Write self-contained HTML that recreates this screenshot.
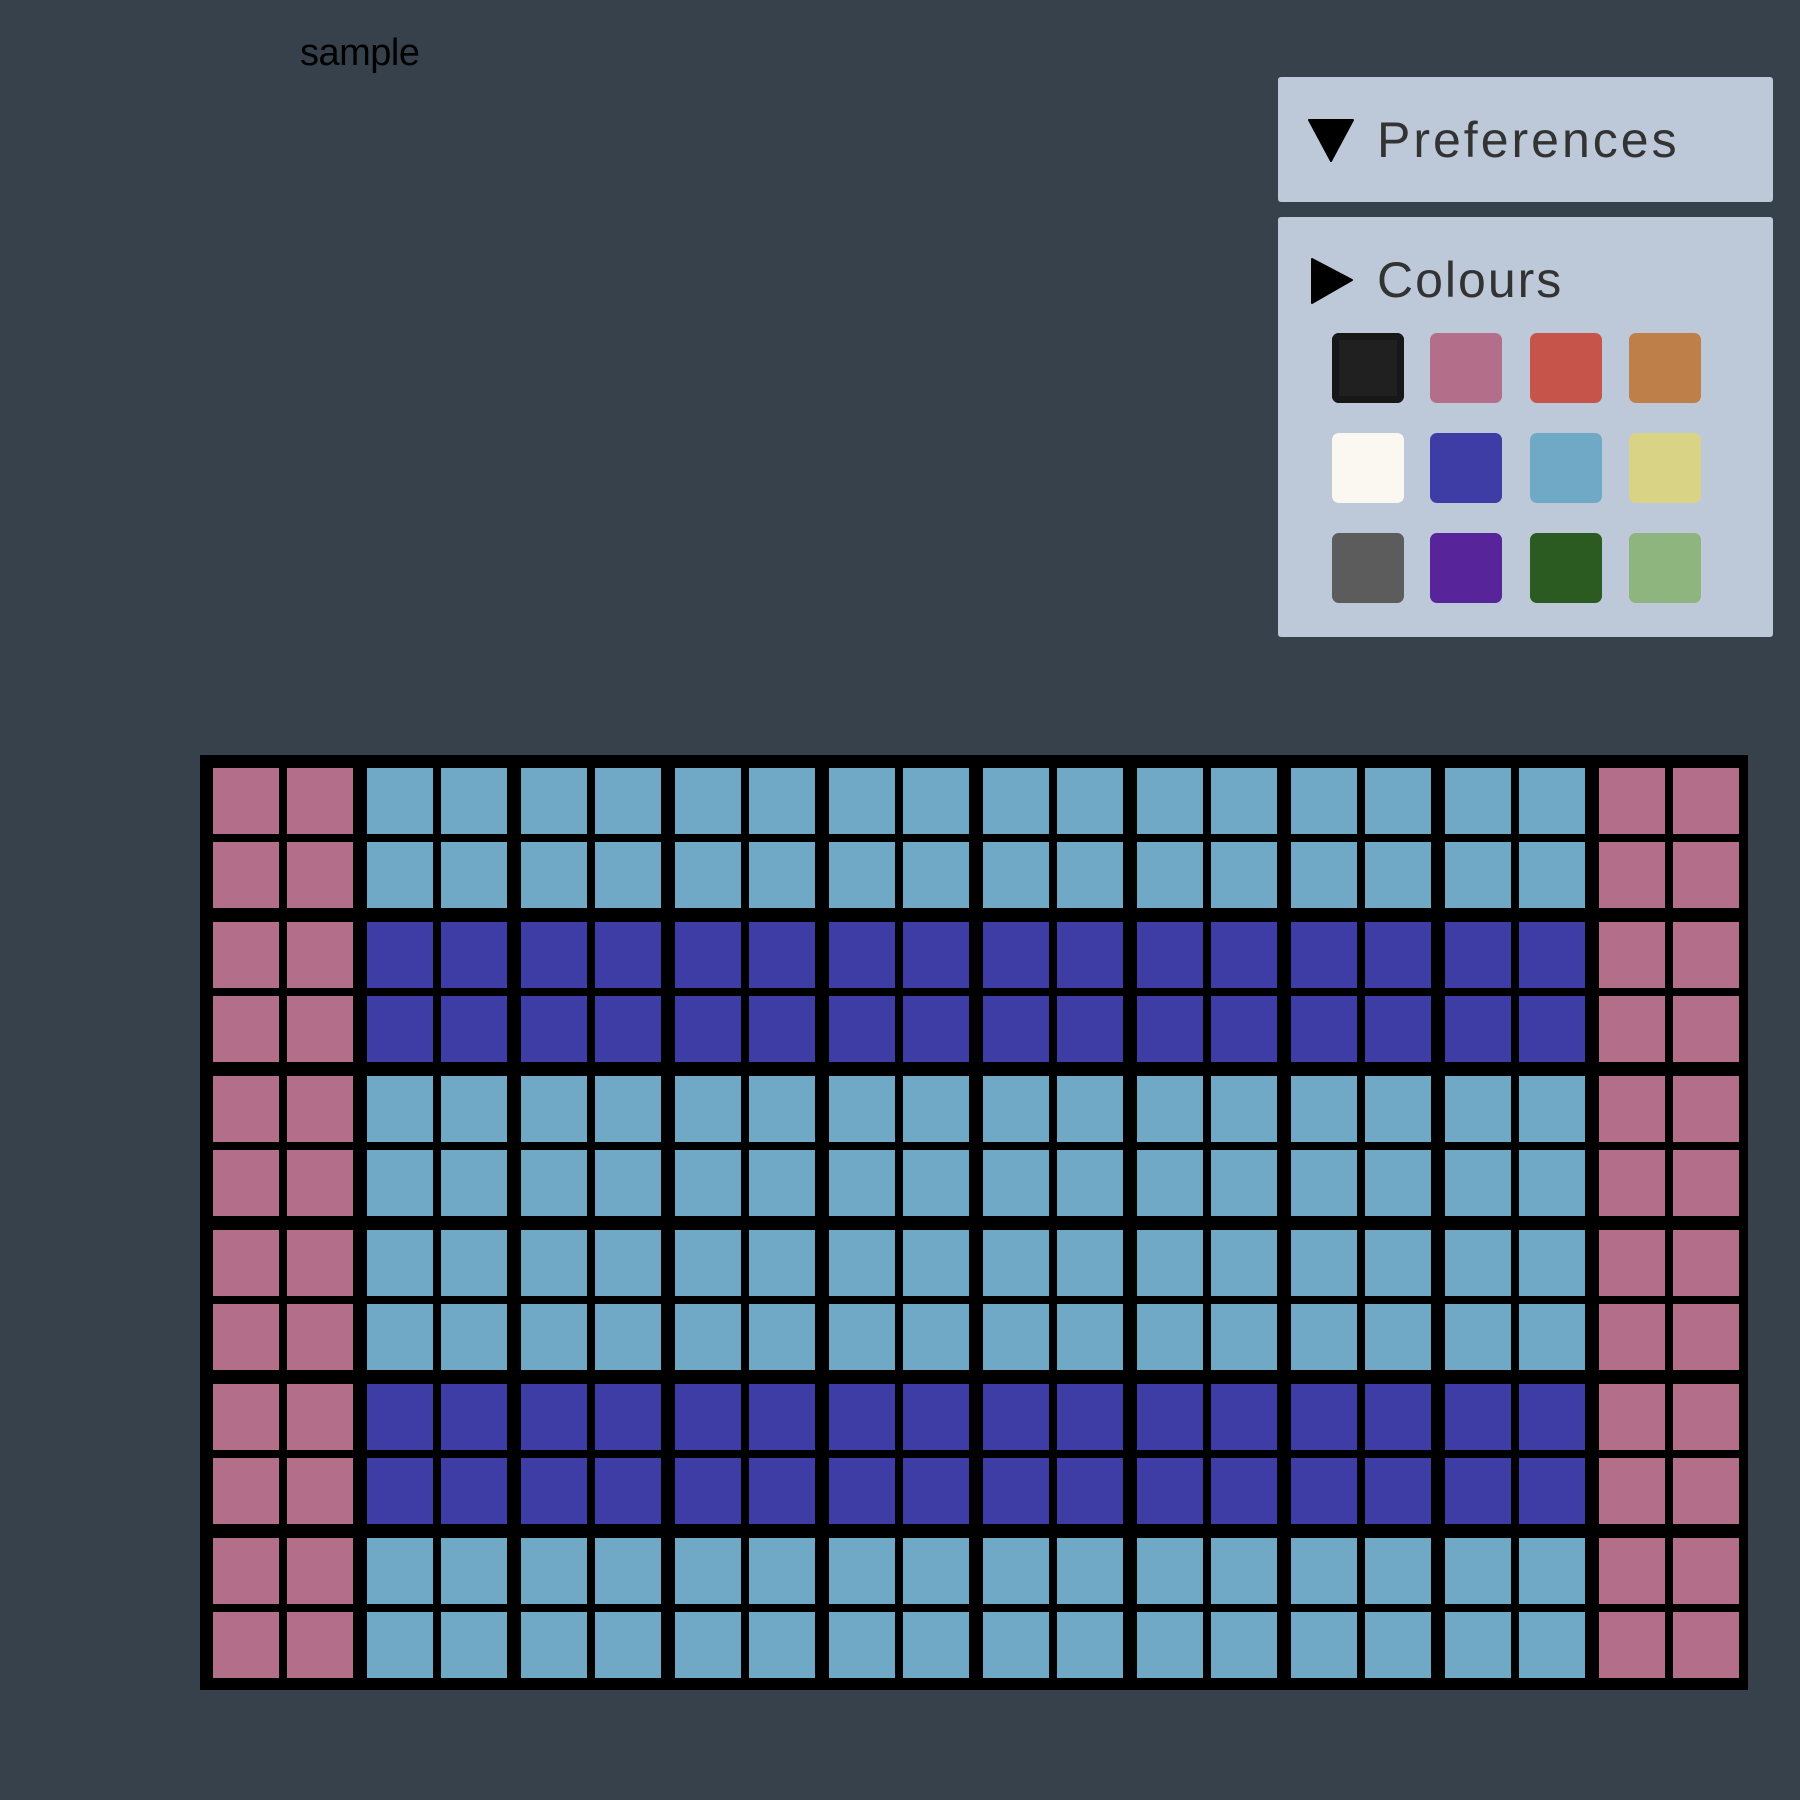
<!DOCTYPE html>
<html><head><style>
html,body{margin:0;padding:0}
body{width:1800px;height:1800px;background:#37414c;position:relative;overflow:hidden;font-family:"Liberation Sans",sans-serif}
.abs{position:absolute}
.panel{position:absolute;left:1278px;width:495px;background:#bdc9d9;border-radius:3px}
.title{position:absolute;left:99px;color:#333;font-size:50px;line-height:50px;letter-spacing:3px}
.sw{position:absolute;width:72px;height:70px;border-radius:7px}
</style></head><body>
<div class="abs" style="left:300px;top:32px;font-size:38px;color:#000;letter-spacing:-0.5px">sample</div>

<div class="panel" style="top:77px;height:125px">
  <svg class="abs" style="left:30px;top:42px" width="46" height="43"><polygon points="1,1 45,1 23,42" fill="#000" stroke="#000" stroke-width="2" stroke-linejoin="round"/></svg>
  <div class="title" style="top:38px">Preferences</div>
</div>
<div class="panel" style="top:217px;height:420px">
  <svg class="abs" style="left:33px;top:41px" width="43" height="47"><polygon points="1,1 41,22 1,45" fill="#000" stroke="#000" stroke-width="2" stroke-linejoin="round"/></svg>
  <div class="title" style="top:38px;letter-spacing:2px">Colours</div>
  <div class="sw" style="left:54px;top:116px;background:#202020;box-shadow:inset 0 0 0 7px #171717"></div>
  <div class="sw" style="left:152px;top:116px;background:#b36f8a"></div>
  <div class="sw" style="left:252px;top:116px;background:#c6544b"></div>
  <div class="sw" style="left:351px;top:116px;background:#bf7f48"></div>
  <div class="sw" style="left:54px;top:216px;background:#faf8f0"></div>
  <div class="sw" style="left:152px;top:216px;background:#3e3da6"></div>
  <div class="sw" style="left:252px;top:216px;background:#70a9c6"></div>
  <div class="sw" style="left:351px;top:216px;background:#d8d385"></div>
  <div class="sw" style="left:54px;top:316px;background:#5c5c5c"></div>
  <div class="sw" style="left:152px;top:316px;background:#58249a"></div>
  <div class="sw" style="left:252px;top:316px;background:#2b5b20"></div>
  <div class="sw" style="left:351px;top:316px;background:#8fb57f"></div>
</div>

<div class="abs" style="left:200px;top:755px;width:1548px;height:935px;background:#000"></div>
<div class="abs" style="left:213px;top:768px;width:1526px;height:910px;background:linear-gradient(to bottom,#70a9c6 0 154px,#3e3da6 154px 308px,#70a9c6 308px 616px,#3e3da6 616px 770px,#70a9c6 770px 910px)">
  <div class="abs" style="left:0;top:0;width:140px;height:910px;background:#b36f8a"></div>
  <div class="abs" style="left:1386px;top:0;width:140px;height:910px;background:#b36f8a"></div>
  <div class="abs" style="left:0;top:0;width:1526px;height:910px;background:repeating-linear-gradient(to right,transparent 0 66px,#000 66px 74px,transparent 74px 140px,#000 140px 154px),repeating-linear-gradient(to bottom,transparent 0 66px,#000 66px 74px,transparent 74px 140px,#000 140px 154px)"></div>
</div>
</body></html>
